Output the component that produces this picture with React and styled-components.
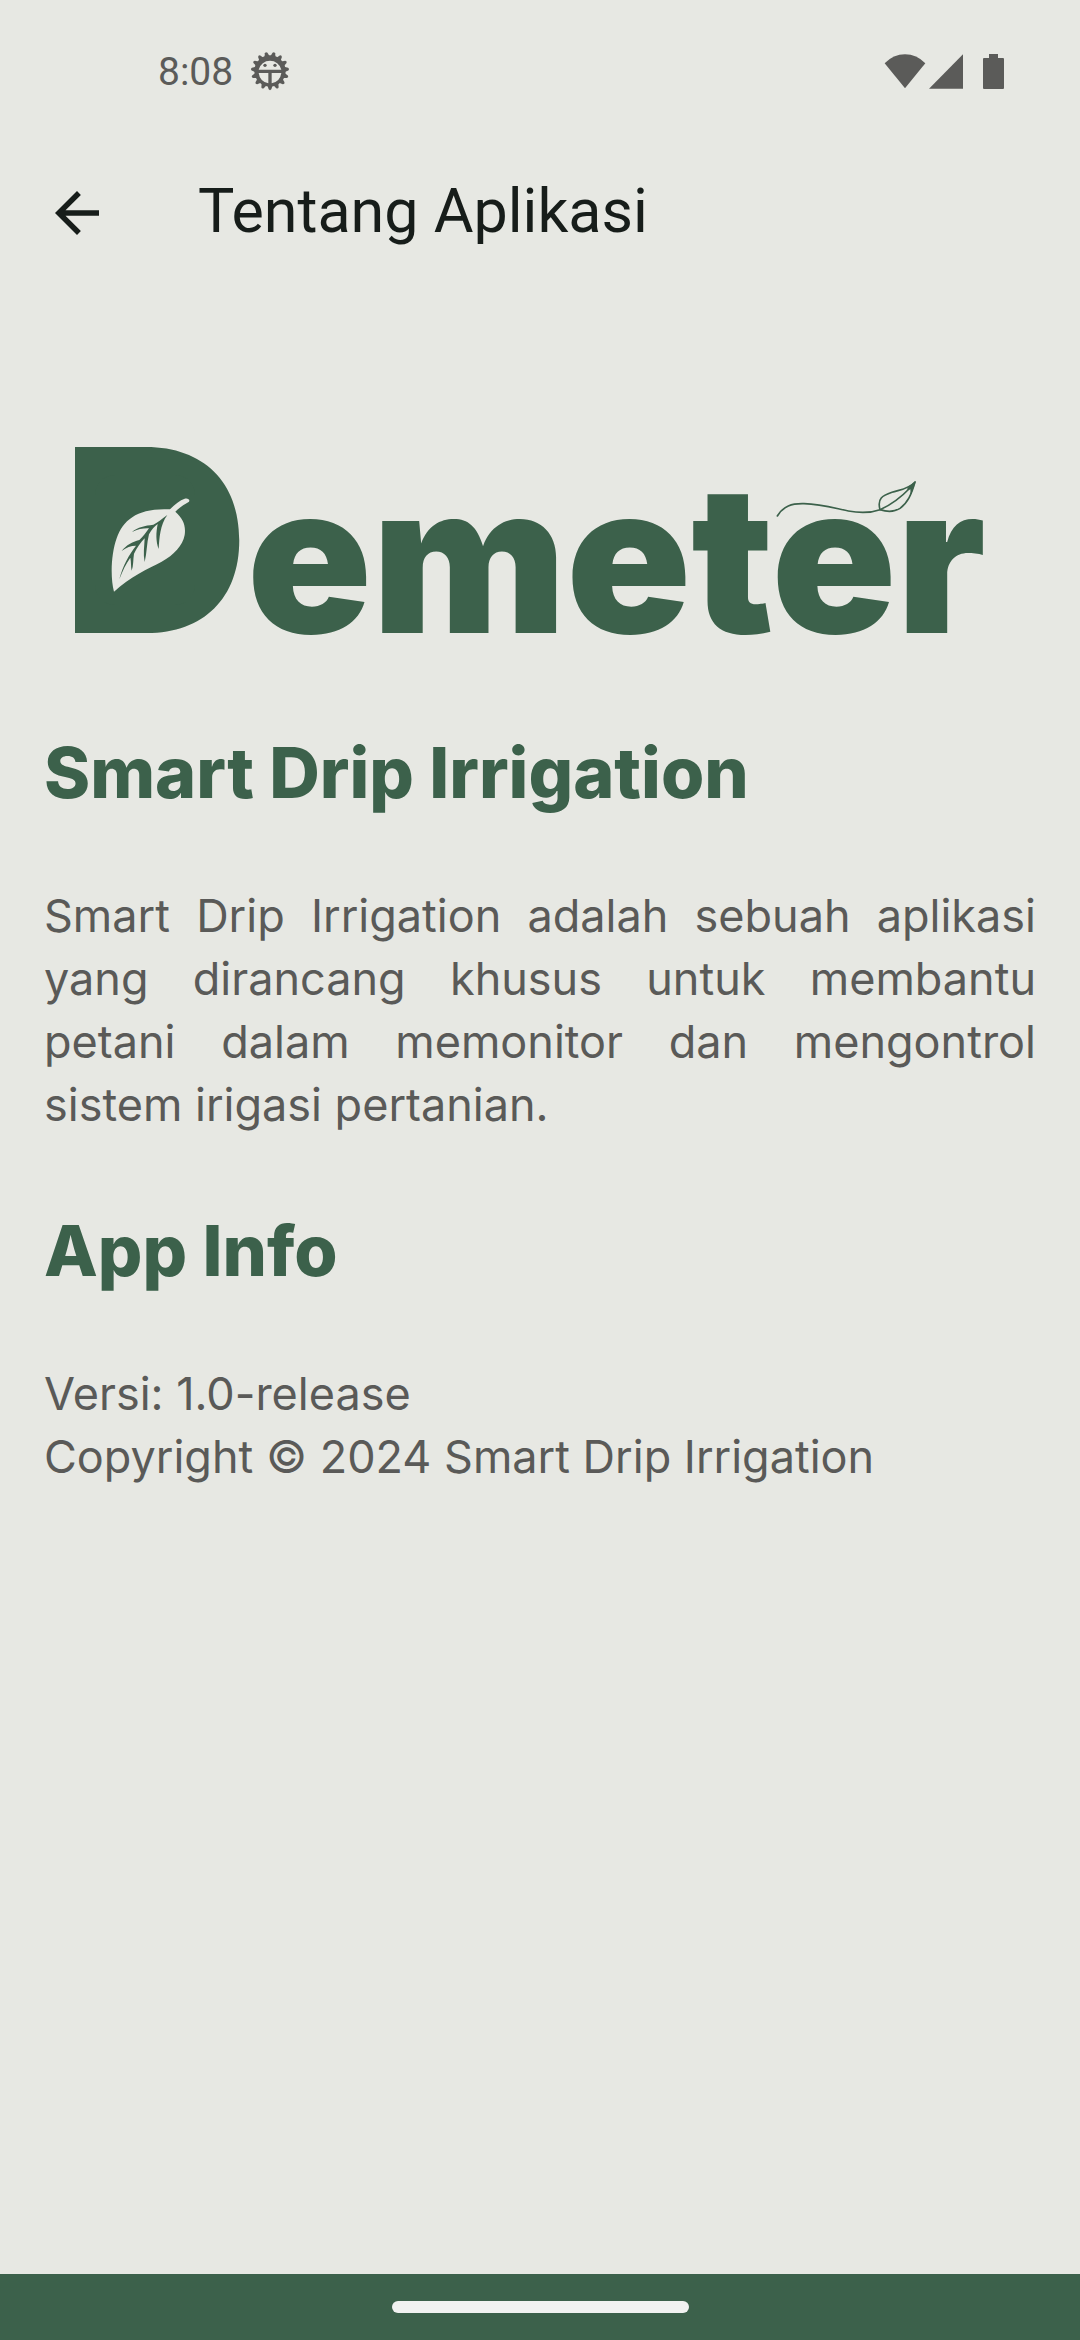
import React from "react";
import styled, { createGlobalStyle } from "styled-components";

const GlobalStyle = createGlobalStyle`
  * { box-sizing: border-box; }
  body { margin: 0; background: #e7e8e3; }
`;

const Screen = styled.div`
  display: flex;
  flex-direction: column;
  min-height: 100vh;
  background: #e7e8e3;
  color: #5a5a58;
`;

const StatusBar = styled.header`
  display: flex;
  align-items: center;
  justify-content: space-between;
  height: 142px;
  padding: 0 76px 0 158px;
  color: #5b5b59;
  font: 400 39px/48px Roboto, sans-serif;
`;

const StatusGroup = styled.div`
  display: flex;
  align-items: center;
  gap: ${(p) => p.$gap}px;
`;

const Clock = styled.span`
  padding-top: 2px;
`;

const Glyph = styled.svg`
  display: block;
  width: ${(p) => p.$w}px;
  height: ${(p) => p.$h}px;
  fill: currentColor;
`;

const Toolbar = styled.div`
  display: flex;
  align-items: center;
  gap: 88px;
  height: 142px;
  padding: 0 44px;
  color: #171d1a;
`;

const BackButton = styled.button`
  padding: 0;
  border: 0;
  background: none;
  color: inherit;
`;

const Title = styled.h1`
  margin: 0;
  padding-bottom: 4px;
  font: 400 61px/72px Roboto, sans-serif;
`;

const Content = styled.main`
  flex: 1;
  padding: 96px 44px 64px;
`;

const Logo = styled.svg`
  display: block;
  width: 100%;
  height: auto;
  margin-bottom: 23px;
  fill: #3c614b;
  font-family: Inter, sans-serif;
  font-weight: 900;
`;

const Section = styled.section`
  margin-bottom: 65px;
`;

const Heading = styled.h2`
  margin: 0 0 62px;
  color: #3c614b;
  font: 800 70px/99px Inter, sans-serif;
`;

const Paragraph = styled.p`
  margin: 0;
  font: 400 45px/63px Inter, sans-serif;
  text-align: ${(p) => (p.$justify ? "justify" : "left")};
`;

const NavBar = styled.footer`
  display: flex;
  align-items: center;
  justify-content: center;
  height: 66px;
  background: #3c614b;
`;

const HomeHandle = styled.span`
  width: 297px;
  height: 12px;
  border-radius: 6px;
  background: #f1f2f1;
`;

const teeth = Array.from({ length: 15 }, (_, i) => i * 24);

function GearFace() {
  return (
    <Glyph $w={40} $h={40} viewBox="0 0 120 120" aria-hidden="true">
      {teeth.map((a) => (
        <path
          key={a}
          transform={`rotate(${a} 60 60)`}
          d="M51 100L56 115Q60 120 64 115L69 100Z"
        />
      ))}
      <path
        fillRule="evenodd"
        d="M60 13A47 47 0 1 0 60 107A47 47 0 1 0 60 13ZM26 56A35 35 0 0 1 94 56ZM26 66H55V97A37 37 0 0 1 26 66ZM65 66H94A37 37 0 0 1 65 97Z"
      />
      <circle cx="45" cy="43" r="5" />
      <circle cx="75" cy="43" r="5" />
    </Glyph>
  );
}

function DemeterLogo() {
  return (
    <Logo viewBox="-1 -50 992 320" role="img" aria-label="Demeter">
      <text x="18" y="203" fontSize="256">D</text>
      <rect x="50" y="45" width="100" height="130" rx="20" />
      <text x="202" y="203" fontSize="206">emeter</text>
      <g transform="translate(15 0) scale(0.33333)">
        <path
          fill="#e7e8e3"
          d="M162 485C150 440 154 370 170 325C190 268 235 233 330 238C345 222 360 211 374 206C383 203 391 209 387 215C374 222 360 231 346 245C370 266 378 287 374 315C368 347 342 375 305 395C265 416 210 440 162 485Z"
        />
        <path d="M322 255C306 266 294 278 280 284C255 287 233 291 216 306C235 297 252 294 267 295C257 309 250 319 238 330C216 336 200 344 185 363C199 352 213 347 228 347C207 374 188 408 178 448C188 422 198 401 211 383C214 396 212 409 215 422C221 406 219 390 222 371C231 354 242 337 254 325C253 349 249 372 254 396C261 369 260 339 267 313C275 298 283 289 293 282C288 308 287 333 296 357C298 325 300 284 322 255Z" />
      </g>
      <g
        transform="translate(635 0) scale(0.33333)"
        fill="none"
        stroke="#3c614b"
        strokeWidth="5"
        strokeLinecap="round"
        strokeLinejoin="round"
      >
        <path d="M292 258C310 228 335 220 372 221C425 222 465 235 505 243C548 251 575 248 600 239C635 224 665 200 690 174" />
        <path d="M600 239C591 205 607 197 636 187C660 179 687 177 705 156C694 194 683 219 660 235C643 246 622 246 600 239Z" />
        <path fill="#3c614b" d="M705 156L686 171L682 178L692 177L693 190Z" strokeWidth="2" />
      </g>
    </Logo>
  );
}

export default function App() {
  return (
    <Screen>
      <GlobalStyle />
      <StatusBar>
        <StatusGroup $gap={17}>
          <Clock>8:08</Clock>
          <GearFace />
        </StatusGroup>
        <StatusGroup $gap={20}>
          <StatusGroup $gap={3}>
            <Glyph $w={42} $h={35} viewBox="0 0 126 105" aria-hidden="true">
              <path d="M2 28Q28 1 63 1T124 28L63 103Z" />
            </Glyph>
            <Glyph $w={34} $h={35} viewBox="0 0 102 105" aria-hidden="true">
              <path d="M0 104L102 1V104Z" />
            </Glyph>
          </StatusGroup>
          <Glyph $w={21} $h={35} viewBox="0 0 63 105" aria-hidden="true">
            <path d="M18 0H45V12H60Q63 12 63 15V102Q63 105 60 105H3Q0 105 0 102V15Q0 12 3 12H18Z" />
          </Glyph>
        </StatusGroup>
      </StatusBar>
      <Toolbar>
        <BackButton type="button" aria-label="Kembali">
          <Glyph $w={66} $h={66} viewBox="0 0 24 24" aria-hidden="true">
            <path d="M20 11H7.83l5.59-5.59L12 4l-8 8 8 8 1.41-1.41L7.83 13H20v-2z" />
          </Glyph>
        </BackButton>
        <Title>Tentang Aplikasi</Title>
      </Toolbar>
      <Content>
        <DemeterLogo />
        <Section>
          <Heading>Smart Drip Irrigation</Heading>
          <Paragraph $justify>
            Smart Drip Irrigation adalah sebuah aplikasi yang dirancang khusus
            untuk membantu petani dalam memonitor dan mengontrol sistem irigasi
            pertanian.
          </Paragraph>
        </Section>
        <Section>
          <Heading>App Info</Heading>
          <Paragraph>Versi: 1.0-release</Paragraph>
          <Paragraph>Copyright © 2024 Smart Drip Irrigation</Paragraph>
        </Section>
      </Content>
      <NavBar>
        <HomeHandle />
      </NavBar>
    </Screen>
  );
}
